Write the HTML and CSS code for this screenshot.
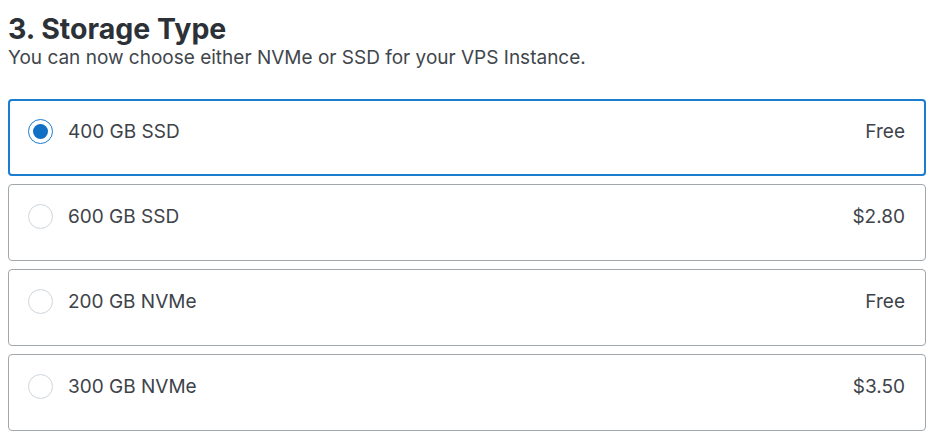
FILE: index.html
```html
<!DOCTYPE html>
<html lang="en">

<head>
    <meta charset="UTF-8">
    <meta name="viewport" content="width=device-width, initial-scale=1.0">
    <title>Storage Type</title>
    <link rel="stylesheet" href="styles.css">
</head>

<body>
    <div class="section">
        <h1 class="title">3. Storage Type</h1>
        <p class="subtitle">You can now choose either NVMe or SSD for your VPS Instance.</p>
        <div class="options">
            <label class="option selected">
                <input type="radio" name="storage" class="radio" checked />
                <span class="name">400 GB SSD</span>
                <span class="price">Free</span>
            </label>
            <label class="option">
                <input type="radio" name="storage" class="radio" />
                <span class="name">600 GB SSD</span>
                <span class="price">$2.80</span>
            </label>
            <label class="option">
                <input type="radio" name="storage" class="radio" />
                <span class="name">200 GB NVMe</span>
                <span class="price">Free</span>
            </label>
            <label class="option">
                <input type="radio" name="storage" class="radio" />
                <span class="name">300 GB NVMe</span>
                <span class="price">$3.50</span>
            </label>
        </div>
    </div>
</body>

</html>
```

FILE: styles.css
```css
body {
    margin: 8px 10px 8px 8px;
    font-family: Inter, "Noto Sans", sans-serif;
    background: #fff;
}

.title {
    margin: 5px 0 0 0;
    font-size: 28.5px;
    line-height: 32px;
    font-weight: 700;
    color: #2c3137;
}

.subtitle {
    margin: 2px 0 30px 0;
    font-size: 19px;
    line-height: 22px;
    color: #41464c;
}

.options {
    display: flex;
    flex-direction: column;
    gap: 8px;
}

.option {
    display: flex;
    align-items: flex-start;
    box-sizing: border-box;
    height: 77px;
    padding: 19px 20px 0 19px;
    border: 1px solid #a2a7ac;
    border-radius: 4px;
    cursor: pointer;
}

.option.selected {
    border: 2px solid #1a7dd0;
    padding: 18px 19px 0 18px;
}

.radio {
    appearance: none;
    -webkit-appearance: none;
    margin: 0 15px 0 0;
    width: 25px;
    height: 25px;
    border: 1px solid #cfd6dc;
    border-radius: 50%;
    background: #fff;
    flex-shrink: 0;
    position: relative;
}

.radio:checked {
    border-color: #1a7dd0;
}

.radio:checked::after {
    content: "";
    position: absolute;
    top: 4px;
    left: 4px;
    width: 15px;
    height: 15px;
    border-radius: 50%;
    background: #0f70c4;
}

.name,
.price {
    font-size: 19px;
    line-height: 25px;
    color: #3e434a;
}

.price {
    margin-left: auto;
}
```
